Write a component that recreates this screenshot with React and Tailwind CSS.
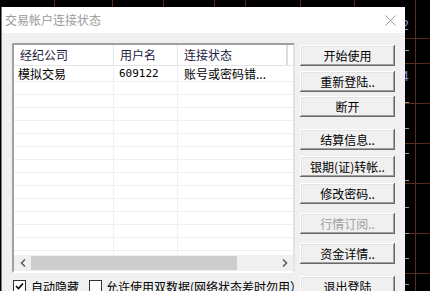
import React from 'react';

const font = { fontFamily: '"Noto Sans CJK SC", "Liberation Sans", sans-serif' };

const rowCount = 14;

function ChartBackdrop() {
    const vLines = [54, 112, 163, 214, 245, 300, 354, 415];
    const hLines = [38, 63, 103, 143, 183, 233, 273];
    const ticks = [50, 102, 128, 153, 180, 207, 233, 258, 284];
    return (
        <svg className="absolute inset-0" width="430" height="291">
            {vLines.map((x) => (
                <line key={x} x1={x + 0.5} y1="0" x2={x + 0.5} y2="291" stroke="#5a2a1c" />
            ))}
            {hLines.map((y) => (
                <line key={y} x1="405" y1={y + 0.5} x2="430" y2={y + 0.5} stroke="#5a2a1c" />
            ))}
            {ticks.map((y) => (
                <line key={y} x1="405" y1={y + 0.5} x2="409" y2={y + 0.5} stroke="#9a9a9a" />
            ))}
            <text x="401" y="30" fill="#8c8cc8" fontSize="14" fontFamily="Liberation Sans">2</text>
            <text x="401" y="81" fill="#8c8cc8" fontSize="14" fontFamily="Liberation Sans">4</text>
        </svg>
    );
}

function WinButton({ children, disabled, className = '' }) {
    return (
        <button
            type="button"
            className={`flex h-[21px] w-[95px] items-center justify-center bg-[#f0f0f0] text-[12px] leading-none shadow-[inset_-1px_-1px_#696969,inset_1px_1px_#ffffff,inset_-2px_-2px_#a0a0a0,inset_2px_2px_#e3e3e3] ${
                disabled ? 'text-[#a0a0a0]' : 'text-black'
            } ${className}`}
        >
            {children}
        </button>
    );
}

function Checkbox({ checked }) {
    return (
        <span className="flex h-[13px] w-[13px] shrink-0 items-center justify-center border border-[#333] bg-white">
            {checked && (
                <svg width="9" height="9" viewBox="0 0 9 9">
                    <path d="M1 4 L3.5 6.5 L8 1.5" fill="none" stroke="#000" strokeWidth="1.6" />
                </svg>
            )}
        </span>
    );
}

export default function App() {
    return (
        <div className="relative h-[291px] w-[430px] overflow-hidden bg-black" style={font}>
            <ChartBackdrop />

            {/* Dialog */}
            <div className="relative ml-[1px] mt-[7px] h-[284px] w-[404px] border-l border-[#7a7a7a] bg-[#f0f0f0]">
                {/* Title bar */}
                <div className="flex h-[26px] items-center justify-between bg-white pl-[3px] pr-[9px]">
                    <span className="text-[12px] leading-none text-[#9a9a9a]">交易帐户连接状态</span>
                    <svg width="11" height="11" viewBox="0 0 11 11">
                        <path d="M0.5 0.5 L10.5 10.5 M10.5 0.5 L0.5 10.5" stroke="#9a9a9a" strokeWidth="1" />
                    </svg>
                </div>

                <div className="flex pl-[10px] pt-[10px]">
                    {/* Left column */}
                    <div className="flex w-[283px] shrink-0 flex-col">
                        <div className="flex h-[230px] flex-col border-2 border-b-white border-l-[#a0a0a0] border-r-[#e3e3e3] border-t-[#a0a0a0] bg-white">
                            {/* Header */}
                            <div className="flex h-[21px] shrink-0 items-center border-b border-[#e5e5e5] text-[12px] leading-none text-[#1a1a40]">
                                <div className="flex h-full w-[100px] items-center border-r border-[#e5e5e5] pl-[6px]">经纪公司</div>
                                <div className="flex h-full w-[64px] items-center border-r border-[#e5e5e5] pl-[6px]">用户名</div>
                                <div className="flex h-full w-[110px] items-center border-r-2 border-[#dcdcdc] pl-[6px]">连接状态</div>
                                <div className="flex-1" />
                            </div>

                            {/* Rows */}
                            <div className="flex-1 overflow-hidden">
                                <div className="flex h-[16px] items-center border-b border-[#f0f0f0] text-[12px] leading-none text-black">
                                    <div className="flex h-full w-[100px] items-center border-r border-[#f0f0f0] pl-[4px]">模拟交易</div>
                                    <div className="flex h-full w-[64px] items-center border-r border-[#f0f0f0] pl-[5px]" style={{ fontFamily: '"DejaVu Sans Mono", monospace', fontSize: '11px' }}>609122</div>
                                    <div className="flex h-full w-[110px] items-center pl-[6px]">账号或密码错...</div>
                                </div>
                                {Array.from({ length: rowCount }).map((_, i) => (
                                    <div key={i} className="flex h-[13px] border-b border-[#f0f0f0]">
                                        <div className="h-full w-[100px] border-r border-[#f0f0f0]" />
                                        <div className="h-full w-[64px] border-r border-[#f0f0f0]" />
                                    </div>
                                ))}
                            </div>

                            {/* Horizontal scrollbar */}
                            <div className="flex h-[16px] shrink-0 items-center bg-[#f0f0f0]">
                                <span className="flex w-[17px] justify-center">
                                    <svg width="6" height="8" viewBox="0 0 6 8">
                                        <path d="M5 0.5 L1.5 4 L5 7.5" fill="none" stroke="#606060" strokeWidth="1.6" />
                                    </svg>
                                </span>
                                <div className="h-[14px] w-[206px] bg-[#cdcdcd]" />
                                <div className="flex-1" />
                                <span className="flex w-[17px] justify-center">
                                    <svg width="6" height="8" viewBox="0 0 6 8">
                                        <path d="M1 0.5 L4.5 4 L1 7.5" fill="none" stroke="#606060" strokeWidth="1.6" />
                                    </svg>
                                </span>
                            </div>
                        </div>

                        {/* Options */}
                        <div className="mt-[7px] flex items-center whitespace-nowrap text-[12px] leading-none text-black">
                            <span className="ml-[1px] shrink-0"><Checkbox checked /></span>
                            <span className="ml-[5px] shrink-0">自动隐藏</span>
                            <span className="ml-[10px] shrink-0"><Checkbox /></span>
                            <span className="ml-[4px] shrink-0">允许使用双数据(网络状态差时勿用）</span>
                        </div>
                    </div>

                    {/* Buttons */}
                    <div className="ml-[5px] flex flex-col pt-[2px]">
                        <WinButton>开始使用</WinButton>
                        <WinButton className="mt-[5px]">重新登陆..</WinButton>
                        <WinButton className="mt-[4px]">断开</WinButton>
                        <WinButton className="mt-[12px]">结算信息..</WinButton>
                        <WinButton className="mt-[6px]">银期(证)转帐..</WinButton>
                        <WinButton className="mt-[6px]">修改密码..</WinButton>
                        <WinButton disabled className="mt-[9px]">行情订阅..</WinButton>
                        <WinButton className="mt-[9px]">资金详情..</WinButton>
                        <WinButton className="mt-[12px]">退出登陆</WinButton>
                    </div>
                </div>
            </div>
        </div>
    );
}
